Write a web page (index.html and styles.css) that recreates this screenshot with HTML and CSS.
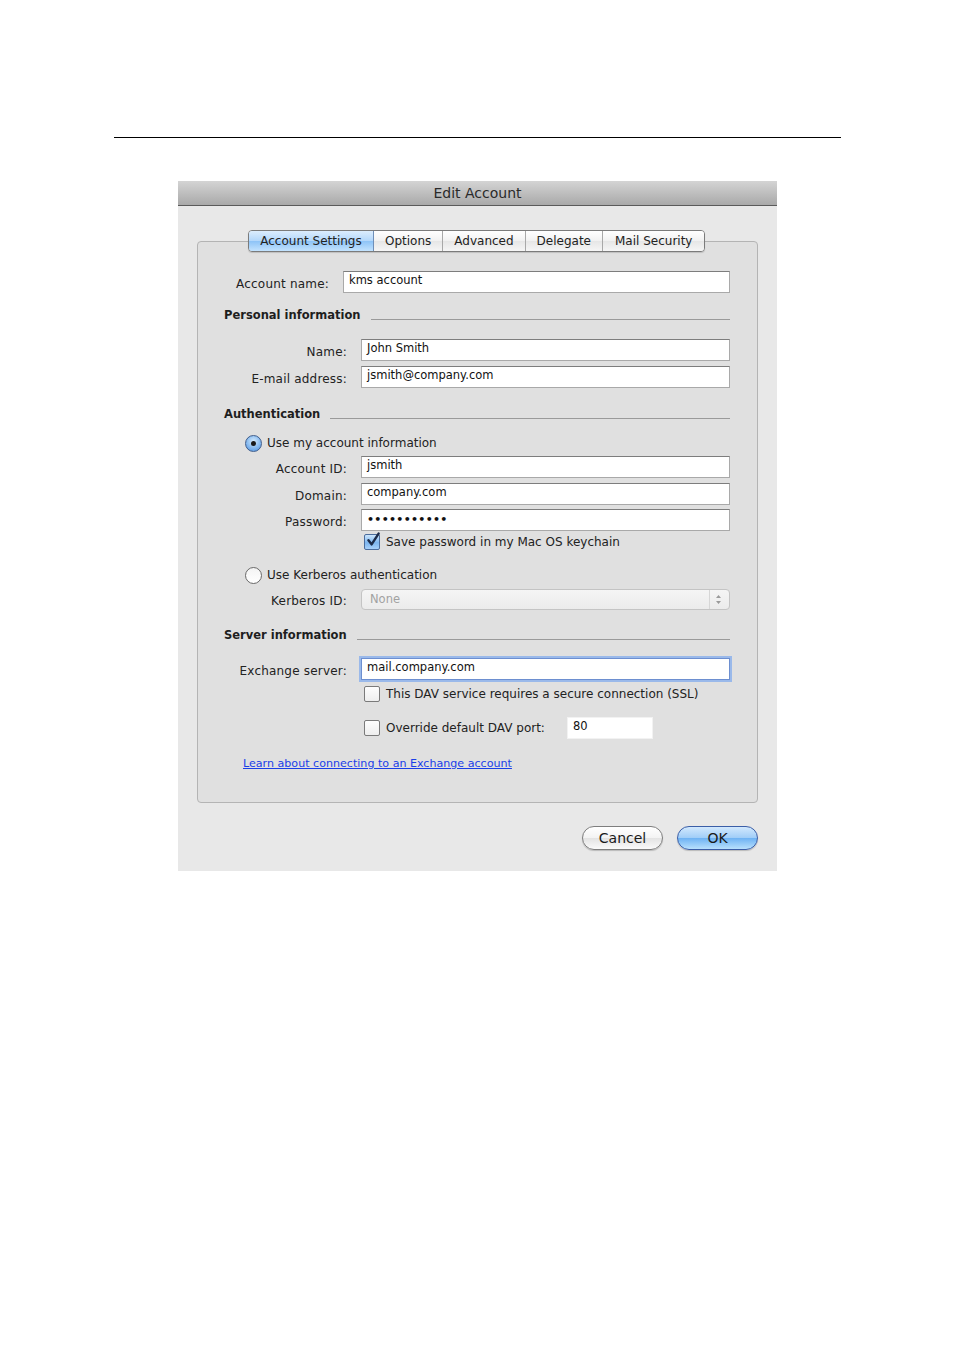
FILE: index.html
```html
<!DOCTYPE html>
<html lang="en">

<head>
    <meta charset="UTF-8">
    <title>Edit Account</title>
    <link rel="stylesheet" href="styles.css">
</head>

<body>
    <div class="page">
        <hr class="page-rule">

        <div class="window">
            <div class="title-bar">Edit Account</div>

            <div class="window-body">
                <div class="tab-box">
                    <div class="tabs">
                        <span class="tab tab-selected">Account Settings</span>
                        <span class="tab">Options</span>
                        <span class="tab">Advanced</span>
                        <span class="tab">Delegate</span>
                        <span class="tab tab-last">Mail Security</span>
                    </div>

                    <div class="form-row row-account">
                        <label class="label label-short">Account name:</label>
                        <div class="field">kms account</div>
                    </div>

                    <div class="section section-personal">
                        <span>Personal information</span>
                        <div class="section-line"></div>
                    </div>

                    <div class="form-row row-name">
                        <label class="label">Name:</label>
                        <div class="field">John Smith</div>
                    </div>
                    <div class="form-row row-gap5">
                        <label class="label">E-mail address:</label>
                        <div class="field">jsmith@company.com</div>
                    </div>

                    <div class="section section-auth">
                        <span>Authentication</span>
                        <div class="section-line"></div>
                    </div>

                    <div class="radio-row row-radio1">
                        <span class="radio radio-on"></span>
                        <span>Use my account information</span>
                    </div>
                    <div class="form-row row-gap4">
                        <label class="label">Account ID:</label>
                        <div class="field">jsmith</div>
                    </div>
                    <div class="form-row row-gap5">
                        <label class="label">Domain:</label>
                        <div class="field">company.com</div>
                    </div>
                    <div class="form-row row-gap4">
                        <label class="label">Password:</label>
                        <div class="field field-password">&bull;&bull;&bull;&bull;&bull;&bull;&bull;&bull;&bull;&bull;&bull;</div>
                    </div>
                    <div class="check-row row-keychain">
                        <span class="checkbox checkbox-on">
                            <svg width="16" height="16" viewBox="0 0 16 16">
                                <path d="M3.5 8.2 L6.6 12.4 L13.6 1.6" fill="none" stroke="#1d2c4a" stroke-width="2.4" stroke-linecap="round" stroke-linejoin="round"/>
                            </svg>
                        </span>
                        <span>Save password in my Mac OS keychain</span>
                    </div>

                    <div class="radio-row row-radio2">
                        <span class="radio"></span>
                        <span>Use Kerberos authentication</span>
                    </div>
                    <div class="form-row row-gap4">
                        <label class="label">Kerberos ID:</label>
                        <div class="select">
                            <span>None</span>
                            <span class="select-arrows">
                                <svg width="7" height="11" viewBox="0 0 7 11">
                                    <path d="M1 4 L3.5 1 L6 4 Z M1 7 L3.5 10 L6 7 Z" fill="#9a9a9a"/>
                                </svg>
                            </span>
                        </div>
                    </div>

                    <div class="section section-server">
                        <span>Server information</span>
                        <div class="section-line"></div>
                    </div>

                    <div class="form-row row-server">
                        <label class="label">Exchange server:</label>
                        <div class="field field-focus">mail.company.com</div>
                    </div>
                    <div class="check-row row-ssl">
                        <span class="checkbox"></span>
                        <span>This DAV service requires a secure connection (SSL)</span>
                    </div>
                    <div class="check-row row-port">
                        <span class="checkbox"></span>
                        <span class="port-label">Override default DAV port:</span>
                        <div class="field field-port">80</div>
                    </div>

                    <a class="help-link" href="#">Learn about connecting to an Exchange account</a>
                </div>

                <div class="buttons">
                    <button class="button">Cancel</button>
                    <button class="button button-default">OK</button>
                </div>
            </div>
        </div>
    </div>
</body>

</html>
```

FILE: styles.css
```css
body {
    margin: 0;
    background: #fff;
    font-family: "DejaVu Sans", "Liberation Sans", sans-serif;
    font-size: 12px;
    color: #222;
}

.page {
    width: 954px;
    padding-top: 137px;
}

.page-rule {
    margin: 0 0 0 114px;
    width: 727px;
    height: 0;
    border: none;
    border-top: 1px solid #000;
}

.window {
    margin: 43px 0 0 178px;
    width: 599px;
    background: #e8e8e8;
}

.title-bar {
    height: 24px;
    line-height: 24px;
    text-align: center;
    font-size: 14px;
    color: #2a2a2a;
    background: linear-gradient(#d4d4d4, #a9a9a9);
    border-bottom: 1px solid #5a5a5a;
}

.window-body {
    padding: 35px 19px 21px 19px;
}

.tab-box {
    position: relative;
    border: 1px solid #b4b4b4;
    border-radius: 4px;
    background: #e0e0e0;
    padding: 29px 27px 31px 26px;
}

.tabs {
    position: absolute;
    top: -12px;
    left: 50px;
    display: flex;
    height: 20px;
    border: 1px solid #7b7b7b;
    border-radius: 4px;
    overflow: hidden;
    box-shadow: 0 1px 1px rgba(0, 0, 0, 0.15);
}

.tab {
    display: flex;
    align-items: center;
    justify-content: center;
    height: 20px;
    padding: 0 11px;
    font-size: 12px;
    color: #222;
    background: linear-gradient(#ffffff, #f1f1f1 50%, #e6e6e6 51%, #f6f6f6);
    border-right: 1px solid #a8a8a8;
}

.tab-last {
    border-right: none;
    padding: 0 12px;
}

.tab-selected {
    width: 102px;
    background: linear-gradient(#dcedfd, #b2d7fb 50%, #8dc3f7 51%, #c3e3fe);
    border-right: 1px solid #6f8fb8;
}

.form-row {
    display: flex;
    align-items: center;
    height: 22px;
}

.label {
    width: 123px;
    flex-shrink: 0;
    text-align: right;
    margin-right: 14px;
    padding-top: 3px;
    letter-spacing: 0.2px;
}

.label-short {
    width: 105px;
}

.field {
    flex: 1;
    line-height: 17px;
    padding: 0 5px;
    box-sizing: border-box;
    height: 22px;
    background: #fff;
    border: 1px solid #a9a9a9;
    border-top-color: #7d7d7d;
    font-size: 11.5px;
    color: #111;
}

.field-password {
    letter-spacing: 0.3px;
    font-size: 11px;
    font-weight: bold;
    line-height: 20px;
}

.field-focus {
    border: 1px solid #6d8fd0;
    box-shadow: 0 0 0 2px #9ab9ea;
}

.field-port {
    flex: none;
    width: 86px;
    border: 1px solid #f2f2f2;
    margin-left: 18px;
}

.row-name {
    margin-top: 16px;
}

.row-gap5 {
    margin-top: 5px;
}

.row-gap4 {
    margin-top: 4px;
}

.section {
    display: flex;
    align-items: center;
    height: 16px;
    font-size: 11.5px;
    font-weight: bold;
    color: #1e1e1e;
}

.section-line {
    flex: 1;
    margin-left: 10px;
    margin-top: 8px;
    height: 0;
    border-top: 1px solid #9a9a9a;
}

.section-personal {
    margin-top: 14px;
}

.section-auth {
    margin-top: 18px;
}

.section-server {
    margin-top: 17px;
}

.radio-row,
.check-row {
    display: flex;
    align-items: center;
    height: 18px;
}

.radio-row {
    padding-left: 21px;
}

.row-radio1 {
    margin-top: 12px;
}

.row-radio2 {
    margin-top: 15px;
}

.radio {
    width: 15px;
    height: 15px;
    border-radius: 50%;
    border: 1px solid #6a6a6a;
    background: linear-gradient(#f4f4f4, #ffffff);
    margin-right: 5px;
    display: flex;
    align-items: center;
    justify-content: center;
}

.radio-on {
    border-color: #3f5d8c;
    background: radial-gradient(circle at 50% 35%, #d6ebfc, #7fb5ee 60%, #4f8fdc);
}

.radio-on::after {
    content: "";
    width: 5px;
    height: 5px;
    border-radius: 50%;
    background: #1a1a1a;
}

.check-row {
    padding-left: 140px;
}

.row-keychain {
    margin-top: 2px;
}

.row-ssl {
    margin-top: 5px;
}

.row-port {
    margin-top: 14px;
    height: 22px;
}

.checkbox {
    position: relative;
    width: 14px;
    height: 14px;
    border: 1px solid #7a7a7a;
    border-radius: 2px;
    background: linear-gradient(#fdfdfd, #eeeeee);
    margin-right: 6px;
    flex-shrink: 0;
}

.checkbox-on {
    border-color: #4b6c9c;
    background: linear-gradient(#cde6fc, #7db6f0 55%, #a8d1fa);
}

.checkbox-on svg {
    position: absolute;
    top: -3px;
    left: 0;
}

.port-label {
    width: 163px;
}

.select {
    flex: 1;
    height: 21px;
    box-sizing: border-box;
    display: flex;
    align-items: center;
    justify-content: space-between;
    padding: 0 7px 0 8px;
    border: 1px solid #c4c4c4;
    border-radius: 4px;
    background: linear-gradient(#f5f5f5, #ebebeb);
    color: #a2a2a2;
    font-size: 11.5px;
}

.select-arrows {
    display: flex;
    align-items: center;
    height: 19px;
    padding-left: 5px;
    border-left: 1px solid #d6d6d6;
}

.row-server {
    margin-top: 15px;
}

.help-link {
    display: block;
    margin-top: 17px;
    margin-left: 19px;
    width: max-content;
    height: 15px;
    line-height: 15px;
    font-size: 11.1px;
    color: #1a3ee8;
    text-decoration: underline;
}

.buttons {
    display: flex;
    justify-content: flex-end;
    gap: 14px;
    margin-top: 23px;
}

.button {
    width: 81px;
    height: 24px;
    border-radius: 12px;
    border: 1px solid #7e7e7e;
    background: linear-gradient(#ffffff, #f3f3f3 50%, #e3e3e3 51%, #fafafa);
    font-family: "DejaVu Sans", "Liberation Sans", sans-serif;
    font-size: 14px;
    color: #1a1a1a;
    box-shadow: 0 1px 1px rgba(0, 0, 0, 0.2);
}

.button-default {
    border-color: #3b5ea7;
    background: linear-gradient(#d2e8fd, #9fcdf8 50%, #6eb2f3 51%, #b8e0fd);
}
```
